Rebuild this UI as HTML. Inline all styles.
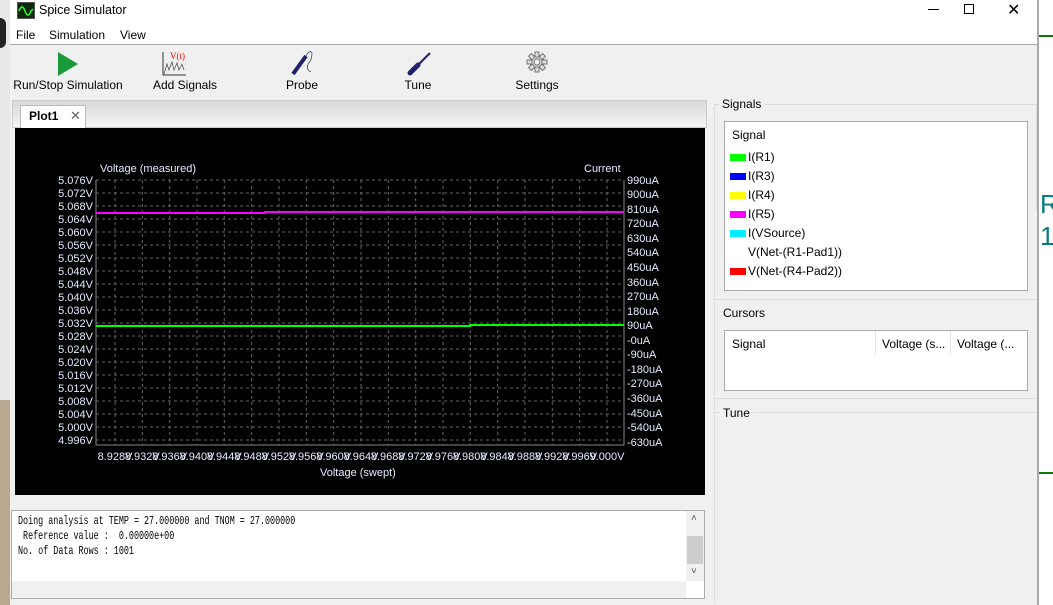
<!DOCTYPE html>
<html><head><meta charset="utf-8"><style>
*{margin:0;padding:0;box-sizing:border-box}
body{width:1053px;height:605px;overflow:hidden;position:relative;background:#f0f0f0;font-family:"Liberation Sans",sans-serif;font-size:12px;color:#000}
.abs{position:absolute}
.tb{font-size:12px;text-align:center}
</style></head><body>
<div class="abs" style="left:0;top:0;width:10px;height:605px;background:#e8e8e8"></div>
<div class="abs" style="left:0;top:400px;width:10px;height:205px;background:#b8a890"></div>
<div class="abs" style="left:0;top:18px;width:6px;height:30px;background:#222;border-radius:0 8px 8px 0"></div>
<div class="abs" style="left:1037px;top:0;width:16px;height:605px;background:#fff;border-left:2px solid #aaa"></div>
<div class="abs" style="left:1039px;top:35px;width:14px;height:2px;background:#0a7a0a"></div>
<div class="abs" style="left:1039px;top:472px;width:14px;height:2px;background:#0a7a0a"></div>
<div class="abs" style="left:1040px;top:188px;color:#0a7a7a;font-size:26px;line-height:32px">R<br>1</div>
<div class="abs" style="left:10px;top:0;width:1027px;height:605px;background:#f0f0f0">
 <div class="abs" style="left:0;top:0;width:1027px;height:45px;background:#fff;border-bottom:1px solid #aaa"></div>
 <div class="abs" style="left:7px;top:2px;width:18px;height:17px;background:#0d2a0d;border:1px solid #555"><svg width="16" height="15"><path d="M1 8 Q4 0 7 8 T13 8 L15 6" stroke="#3f3" stroke-width="1.5" fill="none"/></svg></div>
 <div class="abs" style="left:29px;top:3px;font-size:12.5px">Spice Simulator</div>
 <div class="abs" style="left:918px;top:9px;width:11px;height:1px;background:#000"></div>
 <div class="abs" style="left:954px;top:4px;width:10px;height:10px;border:1px solid #000"></div>
 <div class="abs" style="left:997px;top:0px;font-size:16px">✕</div>
 <div class="abs" style="left:6px;top:28px">File</div>
 <div class="abs" style="left:39px;top:28px">Simulation</div>
 <div class="abs" style="left:110px;top:28px">View</div>
 <svg class="abs" style="left:47px;top:52px" width="22" height="24"><path d="M1 0 L21 12 L1 24Z" fill="#1a9a3a"/></svg>
 <div class="abs tb" style="left:0;top:78px;width:116px">Run/Stop Simulation</div>
 <svg class="abs" style="left:150px;top:50px" width="28" height="28"><path d="M3 2 V25 H26" stroke="#333" fill="none"/><path d="M4 24 L7 14 L9 20 L12 12 L14 20 L17 13 L19 20 L22 14 L24 20" stroke="#555" fill="none" stroke-width=".8"/><text x="10" y="9" font-size="9" fill="#e00" font-family="Liberation Serif">V(t)</text></svg>
 <div class="abs tb" style="left:140px;top:78px;width:70px">Add Signals</div>
 <svg class="abs" style="left:280px;top:50px" width="26" height="26"><path d="M3 24 L16 6" stroke="#22206a" stroke-width="4"/><path d="M16 6 Q20 -1 22 3 Q22 10 18 14 Q16 20 21 22" stroke="#446" stroke-width=".8" fill="none"/></svg>
 <div class="abs tb" style="left:260px;top:78px;width:64px">Probe</div>
 <svg class="abs" style="left:396px;top:50px" width="26" height="26"><path d="M4 23 L12 15" stroke="#22206a" stroke-width="5" stroke-linecap="round"/><path d="M12 15 L24 3" stroke="#22206a" stroke-width="2"/></svg>
 <div class="abs tb" style="left:378px;top:78px;width:60px">Tune</div>
 <svg class="abs" style="left:516px;top:51px" width="22" height="22"><g transform="translate(11 11)" fill="#ddd" stroke="#777"><circle r="7"/><g><rect x="-2" y="-10" width="4" height="5"/><rect x="-2" y="5" width="4" height="5"/><rect x="-10" y="-2" width="5" height="4"/><rect x="5" y="-2" width="5" height="4"/></g><g transform="rotate(45)"><rect x="-2" y="-10" width="4" height="5"/><rect x="-2" y="5" width="4" height="5"/><rect x="-10" y="-2" width="5" height="4"/><rect x="5" y="-2" width="5" height="4"/></g><circle r="3" fill="#f0f0f0"/></g></svg>
 <div class="abs tb" style="left:495px;top:78px;width:64px">Settings</div>
 <div class="abs" style="left:2px;top:100px;width:695px;height:28px;background:linear-gradient(#d8d8d8,#f4f4f4);border:1px solid #ccc"></div>
 <div class="abs" style="left:10px;top:105px;width:66px;height:23px;background:#fff;border:1px solid #bbb;border-bottom:none"></div>
 <div class="abs" style="left:19px;top:109px;font-weight:bold">Plot1</div>
 <div class="abs" style="left:60px;top:108px;color:#666;font-size:13px">✕</div>
</div>
<svg class="abs" style="left:15px;top:128px" width="690" height="367"><rect width="690" height="367" fill="#000"/></svg>
<svg class="abs" style="left:0;top:0" width="1053" height="605" font-family="Liberation Sans" font-size="11" fill="#e4ecff">
<g stroke="#666" stroke-dasharray="3,3" stroke-width="1">
<line x1="96" x2="624" y1="180" y2="180"/><line x1="96" x2="624" y1="193" y2="193"/><line x1="96" x2="624" y1="206" y2="206"/><line x1="96" x2="624" y1="219" y2="219"/><line x1="96" x2="624" y1="232" y2="232"/><line x1="96" x2="624" y1="245" y2="245"/><line x1="96" x2="624" y1="258" y2="258"/><line x1="96" x2="624" y1="271" y2="271"/><line x1="96" x2="624" y1="284" y2="284"/><line x1="96" x2="624" y1="297" y2="297"/><line x1="96" x2="624" y1="310" y2="310"/><line x1="96" x2="624" y1="323" y2="323"/><line x1="96" x2="624" y1="336" y2="336"/><line x1="96" x2="624" y1="349" y2="349"/><line x1="96" x2="624" y1="362" y2="362"/><line x1="96" x2="624" y1="375" y2="375"/><line x1="96" x2="624" y1="388" y2="388"/><line x1="96" x2="624" y1="401" y2="401"/><line x1="96" x2="624" y1="414" y2="414"/><line x1="96" x2="624" y1="427" y2="427"/><line x1="96" x2="624" y1="440" y2="440"/>
<line y1="180" y2="445" x1="115" x2="115"/><line y1="180" y2="445" x1="142.3" x2="142.3"/><line y1="180" y2="445" x1="169.7" x2="169.7"/><line y1="180" y2="445" x1="197" x2="197"/><line y1="180" y2="445" x1="224.3" x2="224.3"/><line y1="180" y2="445" x1="251.7" x2="251.7"/><line y1="180" y2="445" x1="279" x2="279"/><line y1="180" y2="445" x1="306.3" x2="306.3"/><line y1="180" y2="445" x1="333.7" x2="333.7"/><line y1="180" y2="445" x1="361" x2="361"/><line y1="180" y2="445" x1="388.3" x2="388.3"/><line y1="180" y2="445" x1="415.7" x2="415.7"/><line y1="180" y2="445" x1="443" x2="443"/><line y1="180" y2="445" x1="470.3" x2="470.3"/><line y1="180" y2="445" x1="497.7" x2="497.7"/><line y1="180" y2="445" x1="525" x2="525"/><line y1="180" y2="445" x1="552.3" x2="552.3"/><line y1="180" y2="445" x1="579.7" x2="579.7"/><line y1="180" y2="445" x1="607" x2="607"/>
</g>
<path d="M96 180 V445 H624 V180" stroke="#888" fill="none"/>
<path d="M96 213 H265 V212 H624" stroke="#f0f" stroke-width="2" fill="none"/>
<path d="M96 326 H470 V325 H624" stroke="#0f0" stroke-width="2" fill="none"/>
<text x="100" y="172">Voltage (measured)</text><text x="584" y="172">Current</text>
<text x="320" y="476">Voltage (swept)</text>
<g text-anchor="end"><text x="93" y="184">5.076V</text><text x="93" y="197">5.072V</text><text x="93" y="210">5.068V</text><text x="93" y="223">5.064V</text><text x="93" y="236">5.060V</text><text x="93" y="249">5.056V</text><text x="93" y="262">5.052V</text><text x="93" y="275">5.048V</text><text x="93" y="288">5.044V</text><text x="93" y="301">5.040V</text><text x="93" y="314">5.036V</text><text x="93" y="327">5.032V</text><text x="93" y="340">5.028V</text><text x="93" y="353">5.024V</text><text x="93" y="366">5.020V</text><text x="93" y="379">5.016V</text><text x="93" y="392">5.012V</text><text x="93" y="405">5.008V</text><text x="93" y="418">5.004V</text><text x="93" y="431">5.000V</text><text x="93" y="444">4.996V</text></g>
<g><text x="627" y="184">990uA</text><text x="627" y="198">900uA</text><text x="627" y="213">810uA</text><text x="627" y="227">720uA</text><text x="627" y="242">630uA</text><text x="627" y="256">540uA</text><text x="627" y="271">450uA</text><text x="627" y="286">360uA</text><text x="627" y="300">270uA</text><text x="627" y="315">180uA</text><text x="627" y="329">90uA</text><text x="627" y="344">-0uA</text><text x="627" y="358">-90uA</text><text x="627" y="373">-180uA</text><text x="627" y="387">-270uA</text><text x="627" y="402">-360uA</text><text x="627" y="417">-450uA</text><text x="627" y="431">-540uA</text><text x="627" y="446">-630uA</text></g>
<g text-anchor="middle"><text x="115" y="460">8.928V</text><text x="142.3" y="460">8.932V</text><text x="169.7" y="460">8.936V</text><text x="197" y="460">8.940V</text><text x="224.3" y="460">8.944V</text><text x="251.7" y="460">8.948V</text><text x="279" y="460">8.952V</text><text x="306.3" y="460">8.956V</text><text x="333.7" y="460">8.960V</text><text x="361" y="460">8.964V</text><text x="388.3" y="460">8.968V</text><text x="415.7" y="460">8.972V</text><text x="443" y="460">8.976V</text><text x="470.3" y="460">8.980V</text><text x="497.7" y="460">8.984V</text><text x="525" y="460">8.988V</text><text x="552.3" y="460">8.992V</text><text x="579.7" y="460">8.996V</text><text x="607" y="460">9.000V</text></g>
</svg>
<div class="abs" style="left:11px;top:510px;width:694px;height:89px;background:#fff;border:1px solid #aaa"></div>
<div class="abs" style="left:18px;top:514px;font-family:'Liberation Mono',monospace;font-size:12px;line-height:15px;white-space:pre;transform:scaleX(0.7);transform-origin:0 0">Doing analysis at TEMP = 27.000000 and TNOM = 27.000000
 Reference value :  0.00000e+00
No. of Data Rows : 1001</div>
<div class="abs" style="left:686px;top:511px;width:18px;height:70px;background:#f0f0f0"></div>
<div class="abs" style="left:687px;top:536px;width:16px;height:28px;background:#cdcdcd"></div>
<div class="abs" style="left:12px;top:581px;width:674px;height:17px;background:#f0f0f0"></div>
<div class="abs" style="left:691px;top:513px;font-size:10px;color:#555">˄</div>
<div class="abs" style="left:691px;top:566px;font-size:10px;color:#555">˅</div>
<div class="abs" style="left:714px;top:104px;width:323px;height:106px;border:1px solid #ddd;border-bottom:none"></div>
<div class="abs" style="left:714px;top:104px;width:1px;height:500px;background:#ddd"></div>
<div class="abs" style="left:714px;top:299px;width:323px;height:1px;background:#ddd"></div>
<div class="abs" style="left:714px;top:398px;width:323px;height:1px;background:#ddd"></div>
<div class="abs" style="left:714px;top:412px;width:323px;height:1px;background:#ddd"></div>
<div class="abs" style="left:719px;top:97px;background:#f0f0f0;padding:0 3px">Signals</div>
<div class="abs" style="left:724px;top:121px;width:304px;height:170px;background:#fff;border:1px solid #aaa"></div>
<div class="abs" style="left:732px;top:128px">Signal</div>
<div class="abs" style="left:730px;top:148px;line-height:19px">
<div><span style="display:inline-block;width:16px;height:7px;background:#0f0;margin-right:2px"></span>I(R1)</div>
<div><span style="display:inline-block;width:16px;height:7px;background:#00f;margin-right:2px"></span>I(R3)</div>
<div><span style="display:inline-block;width:16px;height:7px;background:#ff0;margin-right:2px"></span>I(R4)</div>
<div><span style="display:inline-block;width:16px;height:7px;background:#f0f;margin-right:2px"></span>I(R5)</div>
<div><span style="display:inline-block;width:16px;height:7px;background:#0ef;margin-right:2px"></span>I(VSource)</div>
<div><span style="display:inline-block;width:16px;height:7px;margin-right:2px"></span>V(Net-(R1-Pad1))</div>
<div><span style="display:inline-block;width:16px;height:7px;background:#f00;margin-right:2px"></span>V(Net-(R4-Pad2))</div>
</div>
<div class="abs" style="left:720px;top:306px;background:#f0f0f0;padding:0 3px">Cursors</div>
<div class="abs" style="left:724px;top:330px;width:304px;height:61px;background:#fff;border:1px solid #aaa"></div>
<div class="abs" style="left:732px;top:337px">Signal</div>
<div class="abs" style="left:875px;top:331px;width:1px;height:24px;background:#e4e4e4"></div>
<div class="abs" style="left:950px;top:331px;width:1px;height:24px;background:#e4e4e4"></div>
<div class="abs" style="left:882px;top:337px">Voltage (s...</div>
<div class="abs" style="left:957px;top:337px">Voltage (...</div>
<div class="abs" style="left:720px;top:406px;background:#f0f0f0;padding:0 3px">Tune</div>
</body></html>
